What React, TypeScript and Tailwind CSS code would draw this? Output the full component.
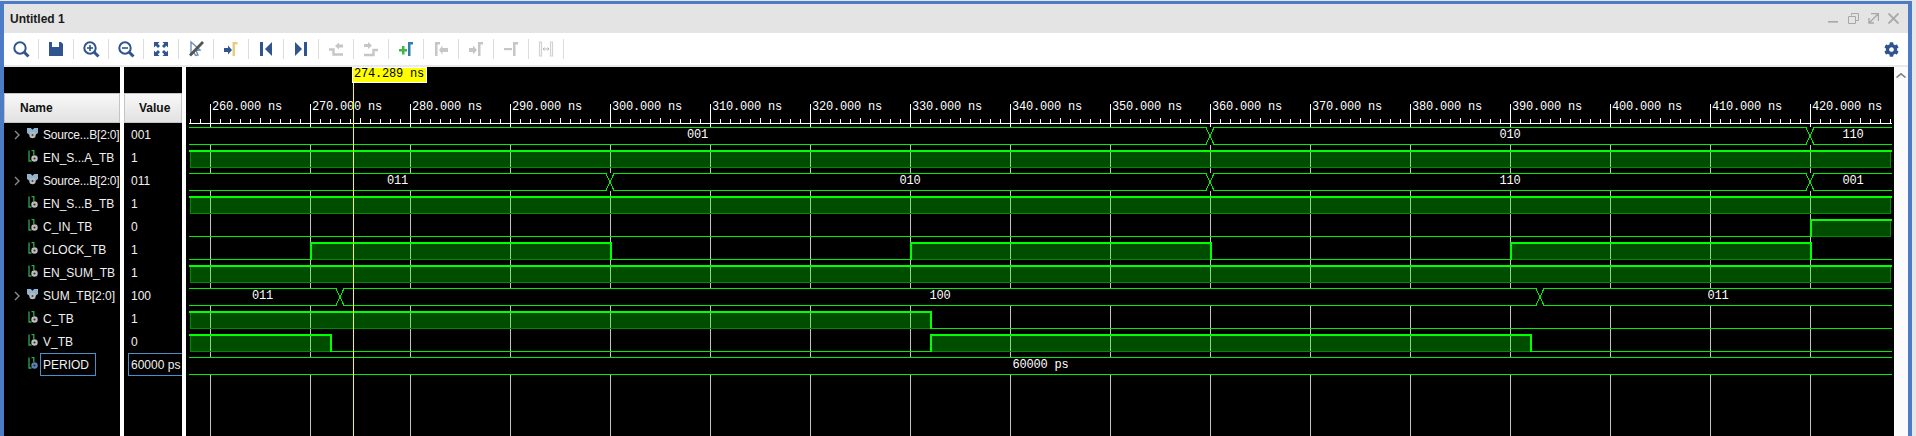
import React from "react";
import { FaCog } from "react-icons/fa";

const NAVY = "#2f5490";
const GREY = "#c6c6c6";

const Gamma = ({ x, c }: { x: number; c: string }) => (
  <path d={`M${x} 17V3H${x + 5}V5.5H${x + 2.5}V17Z`} fill={c} />
);
const ArrowR = ({ x, c, y = 11 }: { x: number; c: string; y?: number }) => (
  <path d={`M${x} ${y - 2}H${x + 4}V${y - 4.5}L${x + 8} ${y}L${x + 4} ${y + 4.5}V${y + 2}H${x}Z`} fill={c} />
);
const Lens = ({ kind }: { kind?: "plus" | "minus" }) => (
  <g fill="none" stroke={NAVY}>
    <circle cx="9" cy="9" r="5.7" strokeWidth="2" />
    <path d="M13 13L17.5 17.5" strokeWidth="3" />
    {kind && <path d="M6 9H12" strokeWidth="1.6" />}
    {kind === "plus" && <path d="M9 6V12" strokeWidth="1.6" />}
  </g>
);

const toolIcons: React.ReactNode[] = [
  <Lens key="a" />,
  <path key="b" d="M3 3H6V8H13V3H15L17 5V17H3Z" fill={NAVY} />,
  <Lens key="c" kind="plus" />,
  <Lens key="d" kind="minus" />,
  <g key="e" fill={NAVY}>
    <path d="M3 3H8.5L6.8 4.7L9 7L7 9L4.7 6.8L3 8.5Z" />
    <path d="M17 3H11.5L13.2 4.7L11 7L13 9L15.3 6.8L17 8.5Z" />
    <path d="M3 17H8.5L6.8 15.3L9 13L7 11L4.7 13.2L3 11.5Z" />
    <path d="M17 17H11.5L13.2 15.3L11 13L13 11L15.3 13.2L17 11.5Z" />
  </g>,
  <g key="f">
    <path d="M5 3L14 11L10 11.5L12 16L9.5 16.5L7.5 12.5L5 15Z" fill="none" stroke="#6f8db8" strokeWidth="1.4" />
    <path d="M17 3L4 16.5" stroke="#555" strokeWidth="2.8" fill="none" />
  </g>,
  <g key="g">
    <ArrowR x={3} c={NAVY} />
    <Gamma x={11.5} c="#e6cf7c" />
  </g>,
  <g key="h" fill={NAVY}>
    <rect x="4" y="3" width="3" height="14" />
    <path d="M16 3V17L9 10Z" />
  </g>,
  <g key="i" fill={NAVY}>
    <rect x="13" y="3" width="3" height="14" />
    <path d="M4 3V17L11 10Z" />
  </g>,
  <g key="j">
    <path d="M3 10.5H7.5V15.5H17" fill="none" stroke={GREY} strokeWidth="2.4" />
    <path d="M9 7L13 3.5V5.5H17V8.5H13V10.5Z" fill={GREY} />
  </g>,
  <g key="k">
    <path d="M3 16H12.5V11H17" fill="none" stroke={GREY} strokeWidth="2.4" />
    <path d="M3 5H7V3L11 6.5L7 10V8H3Z" fill={GREY} />
  </g>,
  <g key="l">
    <path d="M3 10H6V7H8.5V10H11V12.5H8.5V15.5H6V12.5H3Z" fill="#43b649" />
    <Gamma x={12} c="#2f7fae" />
  </g>,
  <g key="m">
    <Gamma x={4} c={GREY} />
    <path d="M17 9H11.5V6.5L8 11L11.5 15.5V13H17Z" fill={GREY} />
  </g>,
  <g key="n">
    <ArrowR x={3} c={GREY} />
    <Gamma x={12} c={GREY} />
  </g>,
  <g key="o">
    <rect x="3" y="9" width="8" height="2.2" fill={GREY} />
    <Gamma x={12} c={GREY} />
  </g>,
  <g key="p" fill="none" stroke="#d2d2d2">
    <path d="M3.5 3H5.5V17H3.5ZM14.5 3H16.5V17H14.5Z" strokeWidth="1.2" />
    <path d="M7 10H13M8.5 8.5L7 10L8.5 11.5M11.5 8.5L13 10L11.5 11.5" stroke="#b5b5b5" strokeWidth="1" />
  </g>,
];

type Sig = { name: string; value: string; bus?: boolean; param?: boolean; tight?: boolean };
const signals: Sig[] = [
  { name: "Source...B[2:0]", value: "001", bus: true, tight: true },
  { name: "EN_S...A_TB", value: "1" },
  { name: "Source...B[2:0]", value: "011", bus: true, tight: true },
  { name: "EN_S...B_TB", value: "1" },
  { name: "C_IN_TB", value: "0" },
  { name: "CLOCK_TB", value: "1" },
  { name: "EN_SUM_TB", value: "1" },
  { name: "SUM_TB[2:0]", value: "100", bus: true },
  { name: "C_TB", value: "1" },
  { name: "V_TB", value: "0" },
  { name: "PERIOD", value: "60000 ps", param: true },
];

const BusIcon = () => (
  <svg width="11" height="11" viewBox="0 0 11 11" className="mt-[-2px] shrink-0">
    <path d="M0 0H3.8L5.5 1.8L7.2 0H11V5L5.5 9L0 5Z" fill="#8db4d2" />
    <circle cx="5.5" cy="7" r="3.2" fill="#b9b9b9" />
    <circle cx="5.5" cy="7" r="1" fill="#444" />
  </svg>
);
const BitIcon = ({ param }: { param?: boolean }) => (
  <svg width="11" height="13" viewBox="0 0 11 13" className="ml-px mt-[-2px] shrink-0">
    <path d="M1 0.5V11H3.5M3.5 0.5H5.8V5" fill="none" stroke="#2fa84f" strokeWidth="1.3" />
    <circle cx="6.5" cy="8.5" r="3.2" fill={param ? "#5d7fb5" : "#bdbdbd"} />
    <circle cx="6.5" cy="8.5" r="1.1" fill="#333" />
  </svg>
);

const TOP0 = 127;
const rowTop = (k: number) => TOP0 + 23 * k;
const X0 = 189;
const X1 = 1892;
const BRIGHT = "#00ee00";

const Bus = ({ k, edges, labels }: { k: number; edges: number[]; labels: string[] }) => {
  const t = rowTop(k) + 0.5;
  const b = t + 17;
  const pts = [X0 - 4, ...edges, X1 + 4];
  return (
    <g>
      <rect x={X0} y={t - 0.5} width={X1 - X0} height={18} fill="#000" />
      {labels.map((l, i) => {
        const a = pts[i] + 4;
        const z = pts[i + 1] - 4;
        return (
          <g key={i}>
            <path d={`M${a} ${t}H${z}M${a} ${b}H${z}`} stroke={BRIGHT} fill="none" />
            <text x={(a + z) / 2} y={t + 10} textAnchor="middle" fill="#fff" fontSize="12" letterSpacing="-0.2" className="[font-family:'Liberation_Mono',monospace]">
              {l}
            </text>
          </g>
        );
      })}
      {edges.map((x) => (
        <path key={x} d={`M${x - 4} ${t}L${x + 4} ${b}M${x - 4} ${b}L${x + 4} ${t}`} stroke={BRIGHT} fill="none" />
      ))}
    </g>
  );
};

const Bit = ({ k, highs }: { k: number; highs: [number, number][] }) => {
  const t = rowTop(k);
  const b = t + 17;
  const lows: [number, number][] = [];
  let cur = X0;
  highs.forEach(([a, z]) => {
    if (a > cur) lows.push([cur, a]);
    cur = z;
  });
  if (cur < X1) lows.push([cur, X1]);
  return (
    <g>
      {lows.map(([a, z], i) => (
        <rect key={i} x={a} y={b} width={z - a} height={1} fill={BRIGHT} />
      ))}
      {highs.map(([a, z], i) => {
        const L = a <= X0 ? 190 : a;
        const R = z >= X1 ? 1891 : z;
        return (
          <g key={i}>
            <rect x={L} y={t} width={R - L} height={18} fill="#00ff00" fillOpacity="0.3" />
            <rect x={L} y={b - 0.5} width={R - L} height={1.5} fill="#008a00" />
            {a <= X0 ? (
              <rect x={190} y={t} width={1} height={18} fill="#008a00" />
            ) : (
              <rect x={a} y={t} width={2} height={18} fill="#00ff00" />
            )}
            {z >= X1 ? (
              <rect x={1890} y={t} width={1} height={18} fill="#008a00" />
            ) : (
              <rect x={z} y={t} width={2} height={18} fill="#00ff00" />
            )}
            <rect x={a} y={t} width={z - a + (z >= X1 ? 0 : 2)} height={2} fill="#00ff00" />
          </g>
        );
      })}
    </g>
  );
};

const majors = Array.from({ length: 17 }, (_, i) => i);

const Wave = () => {
  const ticks: number[] = [];
  for (let x = 190; x < 1892; x += 10) ticks.push(x);
  return (
    <svg width="1708" height="369" viewBox="186 67 1708 369" shapeRendering="crispEdges" className="block">
      <rect x="186" y="67" width="1708" height="369" fill="#000" />
      {majors.map((i) => (
        <rect key={i} x={210 + 100 * i} y={124} width={1} height={312} fill="#c4c4c4" />
      ))}
      <Bus k={0} edges={[1210, 1810]} labels={["001", "010", "110"]} />
      <Bit k={1} highs={[[X0, X1]]} />
      <Bus k={2} edges={[610, 1210, 1810]} labels={["011", "010", "110", "001"]} />
      <Bit k={3} highs={[[X0, X1]]} />
      <Bit k={4} highs={[[1810, X1]]} />
      <Bit k={5} highs={[[310, 610], [910, 1210], [1510, 1810]]} />
      <Bit k={6} highs={[[X0, X1]]} />
      <Bus k={7} edges={[340, 1540]} labels={["011", "100", "011"]} />
      <Bit k={8} highs={[[X0, 930]]} />
      <Bit k={9} highs={[[X0, 330], [930, 1530]]} />
      <Bus k={10} edges={[]} labels={["60000 ps"]} />

      <rect x={189} y={123} width={1703} height={1} fill="#fff" />
      {ticks.map((x) => (
        <rect key={x} x={x} y={(x - 210) % 50 === 0 ? 118 : 119} width={1} height={5} fill="#fff" />
      ))}
      {majors.map((i) => (
        <g key={i}>
          <rect x={210 + 100 * i} y={104} width={1} height={23} fill="#fff" />
          <text x={212 + 100 * i} y={110} fill="#fff" fontSize="12" letterSpacing="-0.2" className="[font-family:'Liberation_Mono',monospace]">
            {260 + 10 * i}.000 ns
          </text>
        </g>
      ))}

      <rect x={353} y={83} width={1} height={353} fill="#ffff00" />
      <rect x={352} y={67} width={75} height={16} fill="#fff" />
      <rect x={353} y={68} width={73} height={14} fill="#ffff00" />
      <text x={354} y={77} fill="#000" fontSize="12" letterSpacing="-0.2" className="[font-family:'Liberation_Mono',monospace]">
        274.289 ns
      </text>
    </svg>
  );
};

const HeaderCell = ({ children, className }: { children: React.ReactNode; className: string }) => (
  <div className={`flex h-[30px] items-center border border-[#c4c4c4] bg-gradient-to-b from-[#f8f8f8] to-[#e2e2e2] text-xs font-bold text-[#111] ${className}`}>
    {children}
  </div>
);

export default function App() {
  return (
    <div className="h-[436px] w-[1916px] overflow-hidden bg-[#e6e6e6] pr-1 pt-px [font-family:'Liberation_Sans',Arial,sans-serif]">
      <div className="flex h-[435px] flex-col border-x-4 border-t-[3px] border-[#4d7cc7]">
        <div className="flex h-[29px] items-center justify-between bg-[#e4e4e4] pl-1.5 pr-[9px]">
          <span className="text-xs font-bold text-[#1a1a1a]">Untitled 1</span>
          <div className="flex items-center gap-[9px]">
            <svg width="11" height="11" viewBox="0 0 11 11"><rect x="0" y="8" width="10" height="1.6" fill="#a8a8a8" /></svg>
            <svg width="11" height="11" viewBox="0 0 11 11" fill="none" stroke="#a8a8a8"><path d="M3.5 2.5V0.5H10.5V7.5H7.5M0.5 3.5H7.5V10.5H0.5Z" /></svg>
            <svg width="11" height="11" viewBox="0 0 11 11" fill="none" stroke="#a8a8a8"><path d="M3 0.5H10.5V8M10 1L1 10M1 5V10H6" strokeWidth="1.4" /></svg>
            <svg width="11" height="11" viewBox="0 0 11 11" fill="none" stroke="#a8a8a8"><path d="M0.5 0.5L10.5 10.5M10.5 0.5L0.5 10.5" strokeWidth="1.8" /></svg>
          </div>
        </div>

        <div className="flex h-[32px] items-center bg-white pr-[9px]">
          {toolIcons.map((icon, i) => (
            <div key={i} className="flex h-5 w-[35px] items-center justify-center border-r border-[#dcdcdc]">
              <svg width="20" height="20" viewBox="0 0 20 20">{icon}</svg>
            </div>
          ))}
          <FaCog className="ml-auto text-[15px] text-[#2f5490]" />
        </div>
        <div className="h-0.5 bg-[#e9e9e9]" />

        <div className="flex flex-1 bg-white">
          <div className="w-[116px] shrink-0 overflow-hidden bg-black pt-[26px]">
            <HeaderCell className="pl-[15px]">Name</HeaderCell>
            {signals.map((s, i) => (
              <div key={i} className="flex h-[23px] items-center text-xs text-[#f0f0f0]">
                <div className="flex w-4 shrink-0 justify-end">
                  {s.bus && (
                    <svg width="6" height="10" viewBox="0 0 6 10" fill="none" stroke="#8a8a8a" strokeWidth="1.4"><path d="M1 1L5 5L1 9" /></svg>
                  )}
                </div>
                <div className="ml-[7px] flex w-4 shrink-0 items-center">{s.bus ? <BusIcon /> : <BitIcon param={s.param} />}</div>
                <span className={s.param ? "ml-[-3px] flex h-[23px] w-[56px] shrink-0 items-center border border-[#4a90c4] pl-[2px]" : s.tight ? "whitespace-nowrap tracking-[-0.2px]" : "whitespace-nowrap"}>{s.name}</span>
              </div>
            ))}
          </div>
          <div className="ml-1 w-[58px] shrink-0 overflow-hidden bg-black pt-[26px]">
            <HeaderCell className="pl-[14px]">Value</HeaderCell>
            {signals.map((s, i) => (
              <div key={i} className="flex h-[23px] items-center whitespace-nowrap pl-[7px] text-xs text-[#f0f0f0]">
                <span className={s.param ? "ml-[-3px] flex h-[23px] w-[60px] shrink-0 items-center border border-[#4a90c4] pl-[2px]" : ""}>{s.value}</span>
              </div>
            ))}
          </div>
          <div className="ml-1 w-[1708px] shrink-0">
            <Wave />
          </div>
          <div className="flex flex-1 justify-center bg-[#fbfbfb] pt-[6px]">
            <svg width="10" height="5" viewBox="0 0 10 5" fill="none" stroke="#808080" strokeWidth="1.6"><path d="M0.5 4.5L5 0.8L9.5 4.5" /></svg>
          </div>
        </div>
      </div>
    </div>
  );
}
